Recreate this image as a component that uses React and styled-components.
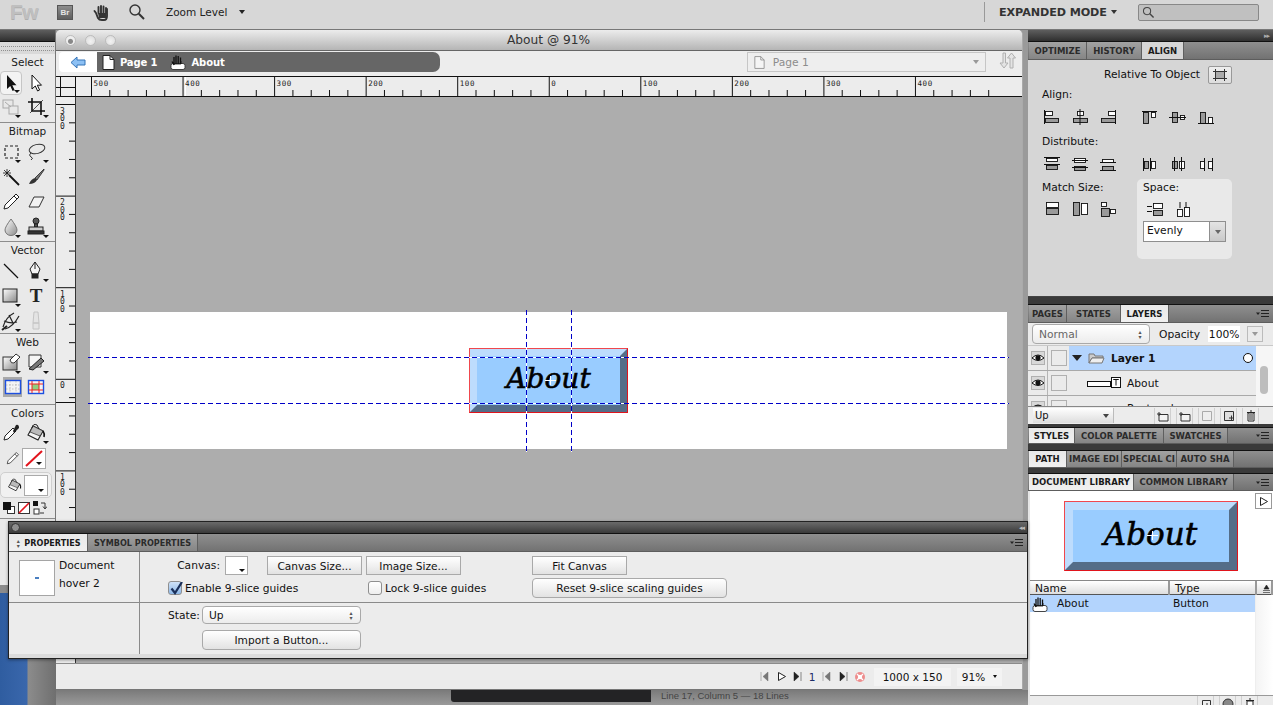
import React from "react";
import styled, { createGlobalStyle, css } from "styled-components";

const Global = createGlobalStyle`
  html, body { margin: 0; padding: 0; overflow: hidden; background: #8c8c8c; }
  * { box-sizing: border-box; }
`;

const UI = `"DejaVu Sans", "Open Sans", sans-serif`;

const Page = styled.div`
  position: relative;
  width: 1273px;
  height: 705px;
  overflow: hidden;
  font-family: ${UI};
  font-size: 10.7px;
  color: #111;
  display: flex;
  flex-direction: column;
`;

/* ---------- top application bar ---------- */
const TopBar = styled.div`
  height: 30px;
  flex: none;
  display: flex;
  align-items: center;
  background: #d7d7d7;
  border-bottom: 1px solid #777;
  padding-bottom: 5px;
`;
const FwLogo = styled.div`
  width: 49px;
  padding-left: 10px;
  font: bold 21px "Liberation Sans", sans-serif;
  color: #bfbfbf;
  text-shadow: 0 1px 0 #aeaeae;
  letter-spacing: -0.5px;
`;
const BrBadge = styled.div`
  width: 16px;
  height: 15px;
  margin-left: 8px;
  background: linear-gradient(#8c8c8c, #5f5f5f);
  border: 1px solid #555;
  color: #e6e6e6;
  font: bold 8px "Liberation Sans", sans-serif;
  display: flex;
  align-items: center;
  justify-content: center;
`;
const TopIcon = styled.div`
  display: flex;
  margin-left: ${(p) => p.$ml}px;
`;
const ZoomLabel = styled.div`
  margin-left: 20px;
  width: 73px;
  font-size: 10.5px;
  color: #222;
`;
const CaretDown = styled.span`
  display: inline-block;
  width: 0;
  height: 0;
  border-left: ${(p) => p.$s || 3}px solid transparent;
  border-right: ${(p) => p.$s || 3}px solid transparent;
  border-top: ${(p) => (p.$s || 3) + 1}px solid ${(p) => p.$c || "#222"};
`;
const Spacer = styled.div`
  flex: 1;
`;
const TopDivider = styled.div`
  width: 1px;
  height: 20px;
  background: #999;
  margin-right: 14px;
`;
const ModeLabel = styled.div`
  font-weight: bold;
  font-size: 11.2px;
  width: 112px;
  letter-spacing: -0.1px;
  color: #333;
  white-space: nowrap;
`;
const TopSearch = styled.div`
  width: 121px;
  height: 17px;
  margin: 0 14px 0 21px;
  background: #c0c0c0;
  border: 1px solid #888;
  border-radius: 2px;
  padding-left: 3px;
  display: flex;
  align-items: center;
`;

/* ---------- main row ---------- */
const Main = styled.div`
  flex: 1;
  display: flex;
  min-height: 0;
`;
const LeftCol = styled.div`
  width: 56px;
  flex: none;
  display: flex;
  flex-direction: column;
`;
const Tools = styled.div`
  height: 555px;
  background: #e9e9e9;
  border-right: 1px solid #777;
  flex: none;
`;
const Wallpaper = styled.div`
  flex: 1;
  margin-top: 8px;
  background: linear-gradient(90deg, #2f5da0 0, #3a67ac 27px, #8c8c8c 28px, #6f6f6f 100%);
`;
const DarkHead = styled.div`
  height: 12px;
  background: linear-gradient(#5e5e5e, #2f2f2f);
  border-bottom: 1px solid #111;
  display: flex;
  align-items: center;
  justify-content: flex-end;
  padding-right: 4px;
  color: #aaa;
  font-size: 7px;
  letter-spacing: -1px;
`;
const Grip = styled.div`
  height: 12px;
  padding-top: 4px;
  background: #d9d9d9;
  &::after {
    content: "";
    display: block;
    margin: 0 1px;
    height: 3px;
    border-top: 1px dotted #8f8f8f;
    border-bottom: 1px dotted #8f8f8f;
  }
`;
const ToolSection = styled.div`
  border-bottom: ${(p) => (p.$last ? "none" : "1px solid #8d8d8d")};
  padding-bottom: ${(p) => p.$pb || 0}px;
`;
const ToolLabel = styled.div`
  height: ${(p) => p.$h || 16}px;
  line-height: ${(p) => p.$h || 16}px;
  text-align: center;
  font-size: 10.5px;
  color: #1a1a1a;
`;
const ToolGrid = styled.div`
  display: grid;
  grid-template-columns: 22px 28px;
  grid-auto-rows: ${(p) => p.$row || 25}px;
`;
const Tool = styled.div`
  position: relative;
  display: flex;
  align-items: center;
  justify-content: center;
  ${(p) =>
    p.$active &&
    css`
      background: #f3f3f3;
      border: 1px solid #c6c6c6;
      border-radius: 4px;
      margin-left: 0;
    `}
  ${(p) =>
    p.$pressed &&
    css`
      background: #a9a9a9;
      margin: 2px 0 2px 3px;
    `}
  ${(p) =>
    p.$more &&
    css`
      &::after {
        content: "";
        position: absolute;
        right: 1px;
        bottom: 1px;
        border-left: 3px solid transparent;
        border-right: 3px solid transparent;
        border-top: 3px solid #111;
      }
    `}
`;
const ToolT = styled.span`
  font: bold 19px "Liberation Serif", serif;
  color: #222;
  line-height: 1;
`;
const ColorRow = styled.div`
  display: flex;
  align-items: center;
  height: ${(p) => p.$h}px;
  padding-left: ${(p) => p.$pl || 0}px;
  gap: ${(p) => p.$gap || 0}px;
`;
const FillRow = styled(ColorRow)`
  background: #f1f1f1;
  border: 1px solid #cfcfcf;
  border-radius: 5px;
  margin: 1px 3px 0 0;
  padding-left: 6px;
`;
const Swatch = styled.div`
  position: relative;
  width: ${(p) => p.$w}px;
  height: ${(p) => p.$h}px;
  background: #fff;
  border: 1px solid #aaa;
  margin-left: ${(p) => p.$ml || 0}px;
  flex: none;
  overflow: hidden;
  &::after {
    content: "";
    position: absolute;
    right: 3px;
    bottom: 3px;
    border-left: 3px solid transparent;
    border-right: 3px solid transparent;
    border-top: 3px solid #111;
  }
`;

/* ---------- document window ---------- */
const DocCol = styled.div`
  width: 972px;
  flex: none;
  display: flex;
  flex-direction: column;
  background: #9a9a9a;
`;
const DocWindow = styled.div`
  height: 660px;
  width: 967px;
  flex: none;
  display: flex;
  flex-direction: column;
  background: #ececec;
  border-radius: 5px 5px 0 0;
  border-bottom: 1px solid #777;
  border-right: 1px solid #aaa;
  overflow: hidden;
`;
const TitleBar = styled.div`
  position: relative;
  height: 21px;
  flex: none;
  background: linear-gradient(#ececec, #b5b5b5);
  border-bottom: 1px solid #666;
  display: flex;
  align-items: center;
  justify-content: center;
  font-size: 12.2px;
  color: #333;
  padding-left: 19px;
`;
const Lights = styled.div`
  position: absolute;
  left: 9px;
  top: 5px;
  display: flex;
  gap: 9px;
`;
const Light = styled.i`
  width: 11px;
  height: 11px;
  border-radius: 50%;
  background: radial-gradient(circle at 50% 60%, ${(p) => (p.$first ? "#888 0 2px, #eee 3px" : "#f2f2f2, #d8d8d8")});
  border: 1px solid #bbb;
`;
const TabBar = styled.div`
  height: 25px;
  flex: none;
  display: flex;
  align-items: flex-start;
  padding: 1px 5px 0 3px;
  background: #ededed;
`;
const BackBtn = styled.div`
  width: 38px;
  height: 20px;
  background: #fff;
  border-radius: 4px 0 0 4px;
  display: flex;
  align-items: center;
  justify-content: center;
`;
const Crumbs = styled.div`
  width: 344px;
  height: 20px;
  background: #666;
  border-radius: 0 7px 7px 0;
  display: flex;
  align-items: center;
  padding-left: 5px;
  color: #fff;
  font-weight: bold;
  font-size: 10px;
`;
const Crumb = styled.span`
  margin: 0 ${(p) => p.$mr || 0}px 0 5px;
  letter-spacing: -0.1px;
`;
const PageSelect = styled.div`
  width: 240px;
  height: 20px;
  margin-left: 307px;
  border: 1px solid #c6c6c6;
  background: #eee;
  display: flex;
  align-items: center;
  justify-content: space-between;
  padding: 0 6px;
  color: #8c8c8c;
`;
const PageName = styled.span`
  display: flex;
  align-items: center;
  gap: 8px;
`;
const RulerTop = styled.div`
  height: 21px;
  flex: none;
  display: flex;
  background: #ececec;
  border-top: 1px solid #111;
  border-bottom: 1px solid #111;
`;
const Work = styled.div`
  flex: 1;
  display: flex;
  min-height: 0;
`;
const Pasteboard = styled.div`
  flex: 1;
  background: #adadad;
  padding: 215px 0 0 14px;
  border-left: 1px solid #333;
`;
const Artboard = styled.div`
  position: relative;
  width: 917px;
  height: 137px;
  background: #fff;
  display: flex;
  align-items: center;
  justify-content: center;
`;
const Guide = styled.div`
  position: absolute;
  ${(p) =>
    p.$vertical
      ? css`
          left: ${p.$at}px;
          top: -2px;
          bottom: -3px;
          width: 1px;
          background: repeating-linear-gradient(180deg, #0000c8 0 5px, #fff 5px 8px);
        `
      : css`
          top: ${p.$at}px;
          left: -2px;
          right: -2px;
          height: 1px;
          background: repeating-linear-gradient(90deg, #0000c8 0 5px, #fff 5px 8px);
        `}
`;
const BevelButton = styled.div`
  position: relative;
  width: ${(p) => p.$w}px;
  height: ${(p) => p.$h}px;
  flex: none;
  background: #99ccff;
  border-style: solid;
  border-width: ${(p) => p.$b}px;
  border-color: #bddcfd #546d88 #546d88 #bddcfd;
  display: flex;
  align-items: center;
  justify-content: center;
  padding-bottom: 4px;
  font: italic ${(p) => p.$size}px "DejaVu Serif", serif;
  -webkit-text-stroke: 0.6px #000;
  color: #000;
  &::after {
    content: "";
    position: absolute;
    inset: -${(p) => p.$b}px;
    border: 1px solid #e0141c;
    border-top-color: #f0474d;
    border-left-color: #f0474d;
  }
`;
const Pivot = styled.i`
  position: absolute;
  left: 50%;
  top: 50%;
  width: 11px;
  height: 11px;
  margin: -6px 0 0 -4px;
  background:
    linear-gradient(#fff, #fff) center / 11px 1px no-repeat,
    linear-gradient(#fff, #fff) center / 1px 9px no-repeat;
`;
const StatusBar = styled.div`
  height: 26px;
  flex: none;
  background: #ececec;
  border-top: 1px solid #8c8c8c;
  display: flex;
  align-items: center;
  padding: 0 20px 0 0;
  justify-content: flex-end;
`;
const Transport = styled.div`
  display: flex;
  align-items: center;
  gap: 5.5px;
  margin-right: 3px;
  color: #1b2b66;
  font-size: 10.5px;
`;
const StatusBox = styled.div`
  width: ${(p) => p.$w}px;
  height: 18px;
  margin-left: ${(p) => p.$ml || 0}px;
  background: #f3f3f3;
  display: flex;
  align-items: center;
  justify-content: center;
  gap: 8px;
  font-size: 10.5px;
  color: #111;
`;
const BehindStrip = styled.div`
  flex: 1;
  display: flex;
  align-items: flex-start;
  padding-left: 395px;
  background: linear-gradient(#7a7a7a, #9a9a9a);
`;
const BehindDark = styled.div`
  width: 200px;
  height: 12px;
  background: #232325;
  border-radius: 0 0 0 3px;
`;
const BehindText = styled.div`
  margin-left: 10px;
  font: 9.5px "Liberation Sans", sans-serif;
  color: #444;
  white-space: nowrap;
`;

/* ---------- floating properties panel ---------- */
const PropsPanel = styled.div`
  position: absolute;
  left: 8px;
  top: 521px;
  width: 1020px;
  height: 138px;
  background: #ececec;
  border: 1px solid #222;
  box-shadow: 0 1px 3px rgba(0, 0, 0, 0.4);
  display: flex;
  flex-direction: column;
`;
const PropsTitle = styled.div`
  height: 12px;
  flex: none;
  background: linear-gradient(#6a6a6a, #3a3a3a);
  border-bottom: 1px solid #111;
  display: flex;
  align-items: center;
  justify-content: space-between;
  padding: 0 3px 0 2px;
  color: #bbb;
  font-size: 7px;
  letter-spacing: -1px;
`;
const GreyDot = styled.i`
  width: 9px;
  height: 9px;
  border-radius: 50%;
  background: #8d8d8d;
  border: 1px solid #333;
`;
const TabStrip = styled.div`
  height: ${(p) => p.$h || 18}px;
  flex: none;
  display: flex;
  background: linear-gradient(#8f8f8f, #727272);
  border-bottom: 1px solid #5d5d5d;
  align-items: stretch;
  padding-left: ${(p) => p.$pl || 0}px;
`;
const Tab = styled.div`
  width: ${(p) => p.$w}px;
  flex: none;
  display: flex;
  align-items: center;
  justify-content: center;
  gap: 3px;
  font-size: ${(p) => p.$fs || 8.5}px;
  font-weight: bold;
  white-space: nowrap;
  overflow: hidden;
  border-right: 1px solid #5f5f5f;
  color: ${(p) => (p.$active ? "#1a1a1a" : "#2b2b2b")};
  background: ${(p) => (p.$active ? p.$bg || "linear-gradient(#e8e8e8, #f0f0f0)" : "linear-gradient(#a2a2a2, #858585)")};
`;
const PanelMenu = styled.div`
  margin-left: auto;
  width: 17px;
  display: flex;
  align-items: center;
`;
const PropsBody = styled.div`
  flex: 1;
  display: grid;
  grid-template-columns: 131px 1fr;
  grid-template-rows: 51px 1fr;
`;
const PropsCell = styled.div`
  border-right: ${(p) => (p.$edge ? "1px solid #8a8a8a" : "none")};
  border-bottom: ${(p) => (p.$top ? "1px solid #8a8a8a" : "none")};
`;
const ThumbCell = styled(PropsCell)`
  display: flex;
  padding: 8px 0 0 10px;
  gap: 4px;
`;
const Thumb = styled.div`
  width: 36px;
  height: 36px;
  background: #fff;
  border: 1px solid #a5a5a5;
  display: flex;
  align-items: center;
  justify-content: center;
  &::after {
    content: "";
    width: 4px;
    height: 2px;
    background: #4a7fc0;
  }
`;
const ThumbText = styled.div`
  line-height: 18px;
  margin-top: -3px;
`;
const CanvasGrid = styled(PropsCell)`
  display: grid;
  grid-template-columns: 99px 99px 166px 196px;
  grid-template-rows: 19px 20px;
  row-gap: 3px;
  padding: 4px 0 0 28px;
  align-items: center;
`;
const CanvasField = styled.div`
  display: flex;
  align-items: center;
  justify-content: flex-end;
  gap: 5px;
  padding-right: 19px;
`;
const CanvasSwatch = styled(Swatch)`
  width: 23px;
  height: 19px;
  &::after {
    right: 2px;
    bottom: 2px;
  }
`;
const Btn = styled.div`
  height: ${(p) => (p.$round ? 20 : 19)}px;
  width: ${(p) => p.$w}px;
  border: 1px solid #a9a9a9;
  border-radius: ${(p) => (p.$round ? 4 : 0)}px;
  background: linear-gradient(#fff, #f1f1f1 50%, #e2e2e2);
  display: flex;
  align-items: center;
  justify-content: center;
  white-space: nowrap;
  font-size: 10.6px;
`;
const Check = styled.label`
  display: flex;
  align-items: center;
  gap: 3px;
  white-space: nowrap;
  margin-left: ${(p) => p.$ml || 0}px;
  grid-column: span ${(p) => p.$span || 1};
`;
const CheckBox = styled.i`
  position: relative;
  width: 14px;
  height: 14px;
  border-radius: 3px;
  border: 1px solid #8f8f8f;
  flex: none;
  background: ${(p) => (p.$on ? "linear-gradient(#cfe2f8, #8db8e8)" : "linear-gradient(#fff, #eee)")};
`;
const StateCell = styled.div`
  padding: 3px 0 0 28px;
  display: grid;
  grid-template-columns: 34px 159px;
  grid-template-rows: 18px 18px;
  row-gap: 7px;
  align-items: center;
`;
const SelectBox = styled.div`
  height: ${(p) => p.$h || 18}px;
  width: ${(p) => p.$w || "100%"};
  border: 1px solid #a9a9a9;
  border-radius: 4px;
  background: linear-gradient(#fff, #ececec);
  display: flex;
  align-items: center;
  justify-content: space-between;
  padding: 0 6px;
  color: ${(p) => p.$c || "#111"};
`;
const UpDown = styled.span`
  font-size: 6px;
  line-height: 5px;
  width: 6px;
  color: #555;
  text-align: center;
`;
const ImportSlot = styled.div`
  grid-column: 2;
`;
const PropsFoot = styled.div`
  height: 4px;
  background: #dcdcdc;
  flex: none;
`;

/* ---------- right panels ---------- */
const Right = styled.div`
  flex: 1;
  display: flex;
  flex-direction: column;
  background: #3a3a3a;
  min-width: 0;
`;
const AlignPane = styled.div`
  height: 237px;
  flex: none;
  background: #d6d6d6;
  padding: 0 0 0 14px;
  border-bottom: 1px solid #444;
`;
const RelativeRow = styled.div`
  height: 25px;
  padding: 4px 41px 0 0;
  display: flex;
  justify-content: flex-end;
  align-items: center;
  gap: 8px;
`;
const RelativeBtn = styled.div`
  width: 24px;
  height: 18px;
  border: 1px solid #999;
  border-radius: 2px;
  background: linear-gradient(#eee, #ddd);
  display: flex;
  align-items: center;
  justify-content: center;
`;
const AlignLabel = styled.div`
  height: ${(p) => p.$h || 16}px;
  line-height: 16px;
  margin-top: ${(p) => p.$mt || 0}px;
`;
const IconRow = styled.div`
  display: grid;
  grid-template-columns: repeat(3, 28px) 14px repeat(3, 28px);
  height: 22px;
  margin: ${(p) => p.$mt || 0}px 0 0 -4px;
  align-items: center;
  justify-items: center;
  & > :nth-child(4) {
    grid-column: 5;
  }
`;
const AlignBottom = styled.div`
  display: flex;
  margin-top: 5px;
`;
const MatchCol = styled.div`
  width: 95px;
`;
const MatchRow = styled.div`
  display: grid;
  grid-template-columns: 28px 28px 28px;
  margin: 2px 0 0 -4px;
  height: 22px;
  align-items: center;
  justify-items: center;
`;
const SpaceBox = styled.div`
  width: 95px;
  height: 80px;
  margin-top: -1px;
  background: #e9e9e9;
  border-radius: 5px;
  padding: 1px 6px 0;
`;
const SpaceRow = styled.div`
  display: flex;
  gap: 10px;
  padding-left: 3px;
  height: 22px;
  margin-top: 2px;
  align-items: center;
`;
const Combo = styled.div`
  display: flex;
  width: 83px;
  height: 21px;
  margin-top: 1px;
  border: 1px solid #8f8f8f;
  background: #fff;
`;
const ComboText = styled.div`
  flex: 1;
  padding-left: 3px;
  line-height: 18px;
`;
const ComboArrow = styled.div`
  width: 16px;
  background: linear-gradient(#e4e4e4, #c9c9c9);
  border-left: 1px solid #8f8f8f;
  display: flex;
  align-items: center;
  justify-content: center;
`;
const PanelGroup = styled.div`
  margin-top: ${(p) => p.$mt}px;
  flex: none;
  border-top: 1px solid #111;
`;
const LayersBody = styled.div`
  height: 101px;
  background: #ebebeb;
  display: flex;
  flex-direction: column;
`;
const BlendRow = styled.div`
  height: 23px;
  flex: none;
  display: flex;
  align-items: center;
  padding-left: 4px;
  border-bottom: 1px solid #c9c9c9;
`;
const OpacityLabel = styled.span`
  margin: 0 8px 0 9px;
`;
const OpacityValue = styled.span`
  width: 32px;
  height: 16px;
  background: #fff;
  display: flex;
  align-items: center;
  justify-content: center;
  margin-right: 7px;
`;
const SmallDrop = styled.div`
  width: 16px;
  height: 16px;
  border: 1px solid #bbb;
  display: flex;
  align-items: center;
  justify-content: center;
`;
const LayerArea = styled.div`
  flex: 1;
  display: flex;
  min-height: 0;
  overflow: hidden;
`;
const LayerList = styled.div`
  width: 228px;
  flex: none;
`;
const LayerRow = styled.div`
  height: 25px;
  display: flex;
  align-items: center;
  border-bottom: 1px solid #a9a9a9;
`;
const EyeCell = styled.div`
  width: 20px;
  height: 100%;
  padding-left: 3px;
  flex: none;
  border-right: 1px solid #b5b5b5;
  display: flex;
  align-items: center;
`;
const LockCell = styled.div`
  width: 21px;
  height: 100%;
  flex: none;
  display: flex;
  align-items: center;
  justify-content: center;
  &::after {
    content: "";
    width: 14px;
    height: 14px;
    border: 1px solid #b0b0b0;
  }
`;
const LayerMain = styled.div`
  flex: 1;
  height: 100%;
  display: flex;
  align-items: center;
  padding-left: ${(p) => p.$pl}px;
  gap: 6px;
  font-weight: ${(p) => (p.$sel ? "bold" : "normal")};
  background: ${(p) => (p.$sel ? "#b3d4fd" : "transparent")};
`;
const LayerDot = styled.i`
  margin-left: auto;
  width: 10px;
  height: 10px;
  border-radius: 50%;
  border: 1.5px solid #111;
  background: #fff;
  margin-right: 3px;
`;
const ScrollTrack = styled.div`
  flex: 1;
  background: #f6f6f6;
  padding: 20px 0 0 4px;
`;
const ScrollThumb = styled.div`
  width: 8px;
  height: 28px;
  background: #bdbdbd;
  border-radius: 4px;
`;
const LayerFoot = styled.div`
  height: 18px;
  flex: none;
  background: #ececec;
  border-top: 1px solid #888;
  display: flex;
  align-items: center;
  padding-left: 5px;
`;
const FootSelect = styled.div`
  width: 81px;
  height: 15px;
  display: flex;
  align-items: center;
  justify-content: space-between;
  padding: 0 4px 0 2px;
  border-right: 1px solid #bbb;
  background: linear-gradient(#fff, #ddd);
  font-size: 10px;
`;
const FootIcons = styled.div`
  display: flex;
  margin-left: ${(p) => p.$ml}px;
  gap: 5px;
`;
const FootIcon = styled.div`
  width: 17px;
  height: 16px;
  display: flex;
  align-items: center;
  justify-content: center;
  border-left: 1px solid #cfcfcf;
  border-right: 1px solid #cfcfcf;
`;
const LibraryBody = styled.div`
  flex: 1;
  display: flex;
  flex-direction: column;
  background: #fff;
  border-left: 2px solid #e6e6e6;
  min-height: 0;
`;
const Preview = styled.div`
  position: relative;
  height: 89px;
  flex: none;
  display: flex;
  align-items: center;
  justify-content: center;
  padding-right: 2px;
`;
const PlayBox = styled.div`
  position: absolute;
  right: 1px;
  top: 2px;
  width: 17px;
  height: 16px;
  border: 1px solid #999;
  background: #fff;
  display: flex;
  align-items: center;
  justify-content: center;
`;
const LibHeader = styled.div`
  height: 15px;
  flex: none;
  display: grid;
  grid-template-columns: 140px 87px 1fr;
  background: linear-gradient(#fff, #dedede);
  border-top: 1px solid #888;
  border-bottom: 1px solid #555;
`;
const LibHeadCell = styled.div`
  border-right: 2px solid #999;
  padding-left: 5px;
  line-height: 15px;
  display: flex;
  align-items: center;
`;
const LibArea = styled.div`
  flex: 1;
  display: flex;
  min-height: 0;
`;
const LibList = styled.div`
  width: 225px;
  flex: none;
`;
const LibRow = styled.div`
  height: 17px;
  display: grid;
  grid-template-columns: 143px 1fr;
  background: #b3d4fd;
  align-items: center;
`;
const LibName = styled.div`
  display: flex;
  align-items: center;
  gap: 9px;
  padding-left: 2px;
`;
const LibScroll = styled.div`
  flex: 1;
  background: linear-gradient(90deg, #f4f4f4, #fff);
  border-left: 1px solid #eee;
`;
const LibFoot = styled.div`
  height: 10px;
  flex: none;
  background: #ececec;
  border-top: 1px solid #999;
  display: flex;
  gap: 5px;
  padding-left: 167px;
  overflow: hidden;
`;

/* ---------- icons ---------- */
const Ico = ({ w = 20, h = 20, vb, children }) => (
  <svg width={w} height={h} viewBox={vb || `0 0 ${w} ${h}`} style={{ display: "block", flex: "none" }}>
    {children}
  </svg>
);

const Hand = ({ w = 16, h = 16 }) => (
  <Ico w={w} h={h} vb="0 0 16 16">
    <rect x="1" y="9.5" width="14" height="6" rx="2" fill="#fff" stroke="#333" strokeWidth="0.9" />
    <path d="M4 11V3M6 10V1.5M8.2 10V2M10.5 10V3.5M4 11L2 7.5" stroke="#111" strokeWidth="1.3" fill="none" />
    <path d="M4 10H11V7" stroke="#111" strokeWidth="0.8" fill="none" />
  </Ico>
);
const PageIcon = ({ c = "#fff", s = "#222", w = 13, h = 15 }) => (
  <Ico w={w} h={h} vb="0 0 13 15">
    <path d="M1 .5H8L12 4.5V14.5H1Z" fill={c} stroke={s} />
    <path d="M8 .5V4.5H12" fill="none" stroke={s} />
  </Ico>
);
const Glass = ({ s = 18, c = "#333" }) => (
  <Ico w={s} h={s} vb="0 0 18 18">
    <circle cx="7" cy="7" r="5" fill="none" stroke={c} strokeWidth="1.4" />
    <path d="M10.8 10.8L16 16" stroke={c} strokeWidth="2" />
  </Ico>
);
const MenuLines = () => (
  <Ico w={14} h={9} vb="0 0 14 9">
    <path d="M0 3.5H4L2 6Z" fill="#222" />
    <path d="M5 1.5H13M5 4.5H13M5 7.5H13" stroke="#222" strokeWidth="1" />
  </Ico>
);
const Eye = () => (
  <Ico w={14} h={14} vb="0 0 14 14">
    <rect x=".5" y=".5" width="13" height="13" fill="#d8d8d8" stroke="#b0b0b0" />
    <path d="M1 7Q7 1 13 7Q7 12 1 7Z" fill="#fff" stroke="#111" />
    <circle cx="7" cy="6.8" r="2.6" fill="#111" />
  </Ico>
);

const toolIcons = {
  pointer: <path d="M6 2V16L9.3 13L11.6 18L13.6 17L11.3 12.2H15.5Z" fill="#111" />,
  subselect: <path d="M6 2V16L9.3 13L11.6 18L13.6 17L11.3 12.2H15.5Z" fill="#fff" stroke="#111" />,
  scale: (
    <g fill="#e8e8e8" stroke="#aaa">
      <rect x="2" y="3" width="10" height="8" />
      <rect x="8" y="9" width="9" height="8" />
      <path d="M4 5L10 10" />
    </g>
  ),
  crop: (
    <g fill="none" stroke="#111" strokeWidth="1.6">
      <path d="M6 1V14H19" />
      <path d="M2 5H15V18" />
      <path d="M4 16L17 3" strokeWidth="0.7" />
    </g>
  ),
  marquee: <rect x="4" y="4" width="13" height="12" fill="none" stroke="#222" strokeWidth="1.2" strokeDasharray="3 2" />,
  lasso: (
    <g fill="none" stroke="#333">
      <ellipse cx="11" cy="7" rx="8" ry="4.5" transform="rotate(-14 11 7)" />
      <path d="M5 11Q2 13 5 15Q8 16 5 18" />
    </g>
  ),
  wand: (
    <g stroke="#111">
      <path d="M8 8L18 18" strokeWidth="1.8" />
      <path d="M6 2V10M2 6H10M3 3L9 9M9 3L3 9" strokeWidth="0.8" />
    </g>
  ),
  brush: (
    <g>
      <path d="M18 2L9 11L11 13L18 3Z" fill="#777" stroke="#222" strokeWidth="0.8" />
      <path d="M9 11Q5 12 3 17Q9 17 11 13Z" fill="#333" />
    </g>
  ),
  pencil: (
    <g>
      <path d="M15 2L18 5L7 16L3 17L4 13Z" fill="#fff" stroke="#222" />
      <path d="M13 4L16 7" stroke="#222" />
    </g>
  ),
  eraser: <path d="M8 5H18L13 15H3Z" fill="#f2f2f2" stroke="#333" />,
  drop: <path d="M10 2Q16 10 16 13A6 5.5 0 0 1 4 13Q4 10 10 2Z" fill="url(#grey)" stroke="#777" />,
  stamp: (
    <g stroke="#222" fill="#555">
      <circle cx="10" cy="4" r="3" />
      <path d="M8.5 7H11.5V10H8.5Z" />
      <rect x="3" y="10" width="14" height="4" fill="#ccc" />
      <rect x="2" y="14" width="16" height="3" fill="#333" />
    </g>
  ),
  line: <path d="M3 3L17 17" stroke="#111" strokeWidth="1.2" />,
  pen: (
    <g stroke="#222" fill="#f4f4f4">
      <path d="M9 1L14 8L12 13H6L4 8Z" />
      <path d="M9 1V8" />
      <rect x="6" y="13" width="6" height="4" fill="#222" />
    </g>
  ),
  rect: <rect x="2" y="3" width="14" height="13" fill="url(#sheet)" stroke="#222" />,
  knife: <path d="M8 1H12L13 12H7ZM7 12H13V18H7Z" fill="#e4e4e4" stroke="#c4c4c4" />,
  freeform: (
    <g fill="none" stroke="#222" strokeWidth="1.2">
      <path d="M2 16Q5 6 13 2M4 18Q12 16 18 5M3 10Q10 13 16 11M8 4L12 12" />
      <path d="M1 19L6 15" strokeWidth="2" />
    </g>
  ),
  hotspot: (
    <g>
      <rect x="2" y="5" width="14" height="13" fill="url(#sheet)" stroke="#333" />
      <path d="M9 8L15 2L19 5L13 11Q10 12 9 8Z" fill="#fff" stroke="#333" />
    </g>
  ),
  slice: (
    <g>
      <path d="M3 3H15V15H3Z" fill="#f5f5f5" stroke="#333" />
      <path d="M3 17L15 6L18 9L7 18Z" fill="#777" stroke="#222" />
    </g>
  ),
  hideSlices: (
    <g>
      <rect x="2.5" y="3.5" width="15" height="13" fill="#f4f4f4" stroke="#1d4fe0" strokeWidth="1.4" />
      <path d="M7 4V16M13 4V16M3 8H17M3 12H17" stroke="#aaa" strokeWidth="0.7" strokeDasharray="1.5 1.5" />
    </g>
  ),
  showSlices: (
    <g>
      <rect x="2.5" y="3.5" width="15" height="13" fill="#f4f4f4" stroke="#1d4fe0" strokeWidth="1.4" />
      <rect x="6" y="7" width="7" height="6" fill="#8fd07f" />
      <path d="M6 4V16M13 4V16M3 7H17M3 13H17" stroke="#e22" strokeWidth="1" />
    </g>
  ),
  dropper: (
    <g>
      <path d="M3 17L4 13L12 5L15 8L7 16Z" fill="#fff" stroke="#222" />
      <path d="M12 8L15 2Q18 1 18 5L13 10Z" fill="#222" />
    </g>
  ),
  bucket: (
    <g>
      <path d="M7 3L17 8L12 17L2 12Z" fill="#f4f4f4" stroke="#222" strokeWidth="1.1" />
      <path d="M7 3L17 8L14 13L4 9Z" fill="#bbb" stroke="#222" strokeWidth="0.7" />
      <path d="M6 5Q7 0 11 2L13 6" fill="none" stroke="#222" />
      <path d="M17 8Q19 11 18 14" fill="none" stroke="#111" strokeWidth="1.6" />
    </g>
  ),
};
const ToolIcon = ({ name, s = 20 }) => (
  <Ico w={s} h={s} vb="0 0 20 20">
    {toolIcons[name]}
  </Ico>
);
const Defs = () => (
  <svg width="0" height="0" style={{ position: "absolute" }}>
    <defs>
      <linearGradient id="grey" x1="0" y1="0" x2="1" y2="1">
        <stop offset="0" stopColor="#fff" />
        <stop offset="1" stopColor="#8a8a8a" />
      </linearGradient>
      <linearGradient id="sheet" x1="0" y1="0" x2="1" y2="1">
        <stop offset="0" stopColor="#fff" />
        <stop offset="1" stopColor="#888" />
      </linearGradient>
    </defs>
  </svg>
);

// align-panel glyphs: bars are [x, y, w, h, white]
const Gly = ({ bars = [], lines = [] }) => (
  <Ico w={18} h={16} vb="0 0 18 16">
    {bars.map(([x, y, w, h, white], i) => (
      <rect key={i} x={x + 0.5} y={y + 0.5} width={w} height={h} fill={white ? "#fff" : "#9a9a9a"} stroke="#111" strokeWidth="0.9" />
    ))}
    {lines.map((d, i) => (
      <path key={i} d={d} stroke="#111" strokeWidth="1" fill="none" />
    ))}
  </Ico>
);
const alignIcons = [
  { lines: ["M1.5 1V15"], bars: [[2, 2, 7, 4, 1], [2, 9, 13, 4]] },
  { lines: ["M9 0V16"], bars: [[6, 2, 6, 4, 1], [2, 9, 14, 4]] },
  { lines: ["M16.5 1V15"], bars: [[9, 2, 7, 4, 1], [2, 9, 14, 4]] },
  { lines: ["M1 2.5H16"], bars: [[2, 3, 5, 11], [10, 3, 4, 5, 1]] },
  { lines: ["M0 8.5H17"], bars: [[3, 3, 5, 10], [11, 6, 4, 4, 1]] },
  { lines: ["M1 14.5H17"], bars: [[3, 3, 5, 11], [11, 8, 4, 6, 1]] },
];
const distIcons = [
  { lines: ["M1 1.5H17M1 8.5H17"], bars: [[3, 2, 11, 3, 1], [3, 9, 11, 4]] },
  { lines: ["M1 4.5H17M1 11.5H17"], bars: [[3, 2, 11, 4, 1], [3, 10, 11, 4]] },
  { lines: ["M1 6.5H17M1 14.5H17"], bars: [[3, 3, 11, 3, 1], [3, 10, 11, 4]] },
  { lines: ["M2.5 2V15M9.5 2V15"], bars: [[3, 5, 4, 7], [10, 5, 4, 7, 1]] },
  { lines: ["M5.5 1V15M12.5 1V15"], bars: [[3, 5, 5, 7], [10, 5, 5, 7, 1]] },
  { lines: ["M7.5 2V15M15.5 2V15"], bars: [[3, 5, 4, 7, 1], [11, 5, 4, 7, 1]] },
];
const matchIcons = [
  { lines: [], bars: [[3, 1, 12, 5, 1], [3, 7, 12, 6]] },
  { lines: [], bars: [[2, 1, 6, 13], [10, 2, 6, 11, 1]] },
  { lines: [], bars: [[2, 1, 5, 4, 1], [2, 7, 8, 8], [11, 8, 5, 4, 1]] },
];
const spaceIcons = [
  { lines: ["M1 5.5H6M1 10.5H6"], bars: [[7, 2, 9, 5, 1], [7, 9, 9, 5]] },
  { lines: ["M6 1V7M12 1V7"], bars: [[3, 8, 5, 7, 1], [10, 6, 5, 9, 1]] },
];

const StepIcon = ({ d, c = "#222" }) => (
  <Ico w={11} h={11} vb="0 0 11 11">
    <path d={d} fill={c} stroke={c} strokeWidth="0.5" />
  </Ico>
);

const RulerH = () => {
  const x0 = 35.5;
  const step = 91.55;
  const labels = ["500", "400", "300", "200", "100", "0", "100", "200", "300", "400", "500"];
  const ticks = [];
  for (let i = 0; i < 51; i++) ticks.push(x0 + (i * step) / 5);
  return (
    <Ico w={949} h={19}>
      <path d="M0 10.5H19M4.5 0V19M19.5 0V19" stroke="#111" fill="none" />
      {ticks.map((x, i) => (
        <path key={i} d={i % 5 === 0 ? `M${x} 0V19` : `M${x} 13V19`} stroke="#111" />
      ))}
      <path d="M129.5 0V19" stroke="#fff" />
      {labels.map((t, i) => (
        <text key={i} x={x0 + 2 + i * step} y="9" fontFamily="DejaVu Sans Mono, monospace" fontSize="7.5" letterSpacing="0.6" fill="#222">
          {t}
        </text>
      ))}
    </Ico>
  );
};
const RulerV = () => {
  const y0 = 7.5;
  const step = 91.6;
  const labels = ["300", "200", "100", "0", "100"];
  const ticks = [];
  for (let i = 0; i < 30; i++) ticks.push(y0 + (i * step) / 5);
  return (
    <Ico w={19} h={570}>
      {ticks.map((y, i) => (
        <path key={i} d={i % 5 === 0 ? `M0 ${y}H19` : `M13 ${y}H19`} stroke="#111" />
      ))}
      <path d="M0 305.5H19" stroke="#111" />
      {labels.map((t, i) =>
        t.split("").map((ch, j) => (
          <text key={`${i}-${j}`} x="4" y={y0 + 9 + j * 7.5 + i * step} fontFamily="DejaVu Sans Mono, monospace" fontSize="8" fill="#222">
            {ch}
          </text>
        ))
      )}
    </Ico>
  );
};

export default function App() {
  return (
    <Page>
      <Global />
      <Defs />
      <TopBar>
        <FwLogo>Fw</FwLogo>
        <BrBadge>Br</BrBadge>
        <TopIcon $ml={20}>
          <Ico w={16} h={17} vb="0 0 16 17">
            <path d="M3 9L5 14Q6 16 9 16H11Q14 16 14 12V5M5.5 9V3M8 9V2M10.5 9V2.5M13 9V4M3 9L1.5 7" stroke="#333" strokeWidth="1.9" fill="none" strokeLinecap="round" />
            <path d="M5 9H13V14H6Z" fill="#333" />
          </Ico>
        </TopIcon>
        <TopIcon $ml={19}>
          <Glass />
        </TopIcon>
        <ZoomLabel>Zoom Level</ZoomLabel>
        <CaretDown $s={3} />
        <Spacer />
        <TopDivider />
        <ModeLabel>EXPANDED MODE</ModeLabel>
        <CaretDown $s={3} $c="#333" />
        <TopSearch>
          <Glass s={13} c="#444" />
        </TopSearch>
      </TopBar>

      <Main>
        <LeftCol>
          <Tools>
            <DarkHead />
            <Grip />
            <ToolSection $pb={3}>
              <ToolLabel $h={17}>Select</ToolLabel>
              <ToolGrid $row={24}>
                <Tool $active $more><ToolIcon name="pointer" /></Tool>
                <Tool><ToolIcon name="subselect" /></Tool>
                <Tool $more><ToolIcon name="scale" /></Tool>
                <Tool $more><ToolIcon name="crop" /></Tool>
              </ToolGrid>
            </ToolSection>
            <ToolSection $pb={2}>
              <ToolLabel>Bitmap</ToolLabel>
              <ToolGrid>
                <Tool $more><ToolIcon name="marquee" /></Tool>
                <Tool $more><ToolIcon name="lasso" /></Tool>
                <Tool><ToolIcon name="wand" /></Tool>
                <Tool><ToolIcon name="brush" /></Tool>
                <Tool><ToolIcon name="pencil" /></Tool>
                <Tool><ToolIcon name="eraser" /></Tool>
                <Tool $more><ToolIcon name="drop" /></Tool>
                <Tool $more><ToolIcon name="stamp" /></Tool>
              </ToolGrid>
            </ToolSection>
            <ToolSection>
              <ToolLabel>Vector</ToolLabel>
              <ToolGrid>
                <Tool><ToolIcon name="line" /></Tool>
                <Tool $more><ToolIcon name="pen" /></Tool>
                <Tool $more><ToolIcon name="rect" /></Tool>
                <Tool><ToolT>T</ToolT></Tool>
                <Tool $more><ToolIcon name="freeform" /></Tool>
                <Tool><ToolIcon name="knife" /></Tool>
              </ToolGrid>
            </ToolSection>
            <ToolSection $pb={5}>
              <ToolLabel>Web</ToolLabel>
              <ToolGrid $row={24.5}>
                <Tool $more><ToolIcon name="hotspot" /></Tool>
                <Tool $more><ToolIcon name="slice" /></Tool>
                <Tool $pressed><ToolIcon name="hideSlices" /></Tool>
                <Tool><ToolIcon name="showSlices" /></Tool>
              </ToolGrid>
            </ToolSection>
            <ToolSection>
              <ToolLabel>Colors</ToolLabel>
              <ToolGrid $row={24}>
                <Tool><ToolIcon name="dropper" /></Tool>
                <Tool $more><ToolIcon name="bucket" /></Tool>
              </ToolGrid>
              <ColorRow $h={26} $pl={5}>
                <ToolIcon name="pencil" s={15} />
                <Swatch $w={24} $h={21} $ml={2}>
                  <Ico w={22} h={19}>
                    <path d="M3 17L19 2" stroke="#e2141c" strokeWidth="2" />
                  </Ico>
                </Swatch>
              </ColorRow>
              <FillRow $h={26}>
                <ToolIcon name="bucket" s={15} />
                <Swatch $w={24} $h={21} $ml={2} />
              </FillRow>
              <ColorRow $h={20} $pl={3} $gap={3}>
                <Ico w={12} h={12}>
                  <rect x="4.5" y="4.5" width="7" height="7" fill="#fff" stroke="#333" />
                  <rect x="0" y="0" width="8" height="8" fill="#111" />
                </Ico>
                <Ico w={12} h={12}>
                  <rect x=".5" y=".5" width="11" height="11" fill="#fff" stroke="#333" />
                  <path d="M1 11L11 1" stroke="#e2141c" strokeWidth="1.6" />
                </Ico>
                <Ico w={14} h={14}>
                  <rect x="0" y="0" width="5" height="5" fill="#111" />
                  <rect x="1" y="8" width="5" height="5" fill="#fff" stroke="#333" />
                  <path d="M8 2H12V7M10 5.5L12 8L14 5.5M7 12H11" stroke="#333" fill="none" />
                </Ico>
              </ColorRow>
            </ToolSection>
          </Tools>
          <Wallpaper />
        </LeftCol>

        <DocCol>
          <DocWindow>
            <TitleBar>
              <Lights>
                <Light $first />
                <Light />
                <Light />
              </Lights>
              About @ 91%
            </TitleBar>
            <TabBar>
              <BackBtn>
                <Ico w={16} h={13} vb="0 0 16 13">
                  <path d="M1 6.5L7 1V4H15V9H7V12Z" fill="#8cc0f4" stroke="#3474b8" />
                </Ico>
              </BackBtn>
              <Crumbs>
                <PageIcon />
                <Crumb $mr={13}>Page 1</Crumb>
                <Hand />
                <Crumb>About</Crumb>
              </Crumbs>
              <PageSelect>
                <PageName>
                  <PageIcon c="#f5f5f5" s="#8c8c8c" w={11} h={13} />
                  Page 1
                </PageName>
                <CaretDown $s={3} $c="#999" />
              </PageSelect>
              <TopIcon $ml={11}>
                <Ico w={20} h={18} vb="0 0 20 18">
                  <path d="M6 1V11H3L7 16L11 11H8.5V1ZM13 16V6H10.5L14.5 1L18.5 6H16V16Z" fill="#e4e4e4" stroke="#b0b0b0" />
                </Ico>
              </TopIcon>
            </TabBar>
            <RulerTop>
              <RulerH />
            </RulerTop>
            <Work>
              <RulerV />
              <Pasteboard>
                <Artboard>
                  <BevelButton $w={159} $h={65} $b={8} $size={28}>
                    About
                    <Pivot />
                  </BevelButton>
                  <Guide $at={45} />
                  <Guide $at={91} />
                  <Guide $vertical $at={436} />
                  <Guide $vertical $at={481} />
                </Artboard>
              </Pasteboard>
            </Work>
            <StatusBar>
              <Transport>
                <StepIcon c="#777" d="M2 1V10M9 1L4 5.5L9 10Z" />
                <Ico w={11} h={11}>
                  <path d="M2.5 1.5L9.5 5.5L2.5 9.5Z" fill="#fff" stroke="#222" />
                </Ico>
                <StepIcon d="M9 1V10M2 1L7 5.5L2 10Z" />
                1
                <StepIcon c="#777" d="M2 1V10M9 1L4 5.5L9 10Z" />
                <StepIcon d="M9 1V10M2 1L7 5.5L2 10Z" />
                <Ico w={12} h={12}>
                  <circle cx="6" cy="6" r="5" fill="#ee8d8d" />
                  <circle cx="6" cy="6" r="2.2" fill="#fff" />
                  <path d="M3 3L9 9M9 3L3 9" stroke="#fff" strokeWidth="1.3" />
                </Ico>
              </Transport>
              <StatusBox $w={77} $ml={5}>1000 x 150</StatusBox>
              <StatusBox $w={45} $ml={6}>
                91%
                <CaretDown $s={2} $c="#111" />
              </StatusBox>
            </StatusBar>
          </DocWindow>
          <BehindStrip>
            <BehindDark />
            <BehindText>Line 17, Column 5 — 18 Lines</BehindText>
          </BehindStrip>
        </DocCol>

        <Right>
          <DarkHead>▸▸</DarkHead>
          <TabStrip $h={18} $pl={1}>
            <Tab $w={58}>OPTIMIZE</Tab>
            <Tab $w={55}>HISTORY</Tab>
            <Tab $w={42} $active $bg="#d6d6d6">ALIGN</Tab>
          </TabStrip>
          <AlignPane>
            <RelativeRow>
              Relative To Object
              <RelativeBtn>
                <Ico w={16} h={12}>
                  <rect x="3.5" y="2.5" width="9" height="7" fill="#aaa" stroke="#333" />
                  <path d="M1 2.5H3M13 2.5H15M1 9.5H3M13 9.5H15M3.5 0V2M12.5 0V2M3.5 10V12M12.5 10V12" stroke="#333" />
                </Ico>
              </RelativeBtn>
            </RelativeRow>
            <AlignLabel $mt={2}>Align:</AlignLabel>
            <IconRow $mt={3}>
              {alignIcons.map((g, i) => <Gly key={i} {...g} />)}
            </IconRow>
            <AlignLabel $mt={6}>Distribute:</AlignLabel>
            <IconRow $mt={3}>
              {distIcons.map((g, i) => <Gly key={i} {...g} />)}
            </IconRow>
            <AlignBottom>
              <MatchCol>
                <AlignLabel $h={16}>Match Size:</AlignLabel>
                <MatchRow>
                  {matchIcons.map((g, i) => <Gly key={i} {...g} />)}
                </MatchRow>
              </MatchCol>
              <SpaceBox>
                <AlignLabel>Space:</AlignLabel>
                <SpaceRow>
                  {spaceIcons.map((g, i) => <Gly key={i} {...g} />)}
                </SpaceRow>
                <Combo>
                  <ComboText>Evenly</ComboText>
                  <ComboArrow>
                    <CaretDown $s={3} $c="#666" />
                  </ComboArrow>
                </Combo>
              </SpaceBox>
            </AlignBottom>
          </AlignPane>

          <PanelGroup $mt={7}>
            <TabStrip $pl={1}>
              <Tab $w={38}>PAGES</Tab>
              <Tab $w={54}>STATES</Tab>
              <Tab $w={48} $active>LAYERS</Tab>
              <PanelMenu><MenuLines /></PanelMenu>
            </TabStrip>
            <LayersBody>
              <BlendRow>
                <SelectBox $w="118px" $h={20} $c="#666">
                  Normal
                  <UpDown>▴<br />▾</UpDown>
                </SelectBox>
                <OpacityLabel>Opacity</OpacityLabel>
                <OpacityValue>100%</OpacityValue>
                <SmallDrop><CaretDown $s={3} $c="#999" /></SmallDrop>
              </BlendRow>
              <LayerArea>
                <LayerList>
                  <LayerRow>
                    <EyeCell><Eye /></EyeCell>
                    <LockCell />
                    <LayerMain $sel $pl={3}>
                      <CaretDown $s={5} $c="#222" />
                      <Ico w={17} h={11} vb="0 0 17 11">
                        <path d="M1 3V1H6L7 3H15V5H4L1 10Z" fill="#ccc" stroke="#777" />
                        <path d="M1 10L4 5H16L14 10Z" fill="#eee" stroke="#777" />
                      </Ico>
                      Layer 1
                      <LayerDot />
                    </LayerMain>
                  </LayerRow>
                  <LayerRow>
                    <EyeCell><Eye /></EyeCell>
                    <LockCell />
                    <LayerMain $pl={18}>
                      <Ico w={34} h={12} vb="0 0 34 12">
                        <rect x=".5" y="4.5" width="23" height="5" fill="#fff" stroke="#111" />
                        <rect x="24.5" y=".5" width="9" height="10" fill="#fff" stroke="#111" />
                        <path d="M26.5 3V2.5H31.5V3M29 2.5V8.5" stroke="#111" fill="none" />
                      </Ico>
                      About
                    </LayerMain>
                  </LayerRow>
                  <LayerRow>
                    <EyeCell><Eye /></EyeCell>
                    <LockCell />
                    <LayerMain $pl={18}>
                      <Ico w={34} h={12} vb="0 0 34 12">
                        <rect x=".5" y="4.5" width="33" height="12" fill="#fff" stroke="#111" />
                        <rect x="14" y="5" width="6" height="10" fill="#99ccff" />
                      </Ico>
                      Rectangle
                    </LayerMain>
                  </LayerRow>
                </LayerList>
                <ScrollTrack><ScrollThumb /></ScrollTrack>
              </LayerArea>
              <LayerFoot>
                <FootSelect>
                  Up
                  <CaretDown $s={3} $c="#444" />
                </FootSelect>
                <FootIcons $ml={40}>
                  {[0, 1, 2, 3, 4].map((i) => (
                    <FootIcon key={i}>
                      <Ico w={12} h={12}>
                        {i < 2 && <path d="M2 4.5H11V11H2ZM0 4H4M2 2V6" fill="#f3f3f3" stroke="#333" />}
                        {i === 2 && <path d="M1.5 1.5H10.5V10.5H1.5Z" fill="#eee" stroke="#aaa" />}
                        {i === 3 && <path d="M1.5 1.5H10.5V10.5H1.5ZM6 8H11M8.5 5.5V10.5" fill="#ddd" stroke="#333" />}
                        {i === 4 && <path d="M3 3H9V11H3ZM2 2.5H10M5 1H7M5 4V10M7 4V10" fill="#fff" stroke="#222" />}
                      </Ico>
                    </FootIcon>
                  ))}
                </FootIcons>
              </LayerFoot>
            </LayersBody>
          </PanelGroup>

          <PanelGroup $mt={3}>
            <TabStrip $h={16} $pl={1}>
              <Tab $w={46} $active>STYLES</Tab>
              <Tab $w={89}>COLOR PALETTE</Tab>
              <Tab $w={64}>SWATCHES</Tab>
              <PanelMenu><MenuLines /></PanelMenu>
            </TabStrip>
          </PanelGroup>
          <PanelGroup $mt={6}>
            <TabStrip $h={17} $pl={1}>
              <Tab $w={38} $active>PATH</Tab>
              <Tab $w={55}>IMAGE EDI</Tab>
              <Tab $w={55}>SPECIAL CI</Tab>
              <Tab $w={57}>AUTO SHA</Tab>
            </TabStrip>
          </PanelGroup>
          <PanelGroup $mt={5}>
            <TabStrip $h={17} $pl={1}>
              <Tab $w={105} $active>DOCUMENT LIBRARY</Tab>
              <Tab $w={100}>COMMON LIBRARY</Tab>
              <PanelMenu><MenuLines /></PanelMenu>
            </TabStrip>
          </PanelGroup>
          <LibraryBody>
            <Preview>
              <BevelButton $w={174} $h={70} $b={9} $size={31}>
                About
                <Pivot />
              </BevelButton>
              <PlayBox>
                <Ico w={11} h={11}>
                  <path d="M2.5 1.5L9.5 5.5L2.5 9.5Z" fill="#fff" stroke="#222" />
                </Ico>
              </PlayBox>
            </Preview>
            <LibHeader>
              <LibHeadCell>Name</LibHeadCell>
              <LibHeadCell>Type</LibHeadCell>
              <LibHeadCell>
                <Ico w={9} h={9}>
                  <path d="M4.5 1L7 5H2ZM1 6.5H8M1 8.5H8" fill="#222" stroke="#222" strokeWidth="0.6" />
                </Ico>
              </LibHeadCell>
            </LibHeader>
            <LibArea>
              <LibList>
                <LibRow>
                  <LibName>
                    <Hand />
                    About
                  </LibName>
                  Button
                </LibRow>
              </LibList>
              <LibScroll />
            </LibArea>
            <LibFoot>
              {[0, 1, 2].map((i) => (
                <FootIcon key={i}>
                  <Ico w={12} h={12}>
                    {i === 0 && <path d="M2.5 2.5H10.5V11H2.5ZM7 5V8H4" fill="#eee" stroke="#333" />}
                    {i === 1 && <circle cx="6" cy="6" r="5" fill="#888" stroke="#333" />}
                    {i === 2 && <path d="M3 3H9V11H3ZM2 2.5H10M5 1H7" fill="#fff" stroke="#222" />}
                  </Ico>
                </FootIcon>
              ))}
            </LibFoot>
          </LibraryBody>
        </Right>
      </Main>

      <PropsPanel>
        <PropsTitle>
          <GreyDot />
          ◂◂
        </PropsTitle>
        <TabStrip>
          <Tab $w={79} $fs={8.1} $active>
            <UpDown>▴<br />▾</UpDown>
            PROPERTIES
          </Tab>
          <Tab $w={110} $fs={8.1}>SYMBOL PROPERTIES</Tab>
          <PanelMenu><MenuLines /></PanelMenu>
        </TabStrip>
        <PropsBody>
          <ThumbCell $edge $top>
            <Thumb />
            <ThumbText>
              Document
              <br />
              hover 2
            </ThumbText>
          </ThumbCell>
          <CanvasGrid $top>
            <CanvasField>
              Canvas:
              <CanvasSwatch $w={23} $h={19} />
            </CanvasField>
            <Btn $w={95}>Canvas Size...</Btn>
            <Btn $w={95}>Image Size...</Btn>
            <Btn $w={95}>Fit Canvas</Btn>
            <Check $span={2}>
              <CheckBox $on>
                <Ico w={16} h={14} vb="0 0 16 14">
                  <path d="M2.5 6.5L6 11L13 0" stroke="#1a2f5a" strokeWidth="2.2" fill="none" />
                </Ico>
              </CheckBox>
              Enable 9-slice guides
            </Check>
            <Check $ml={2}>
              <CheckBox />
              Lock 9-slice guides
            </Check>
            <Btn $round $w={195}>Reset 9-slice scaling guides</Btn>
          </CanvasGrid>
          <PropsCell $edge />
          <StateCell>
            State:
            <SelectBox>
              Up
              <UpDown>▴<br />▾</UpDown>
            </SelectBox>
            <ImportSlot>
              <Btn $round $w={159}>Import a Button...</Btn>
            </ImportSlot>
          </StateCell>
        </PropsBody>
        <PropsFoot />
      </PropsPanel>
    </Page>
  );
}
